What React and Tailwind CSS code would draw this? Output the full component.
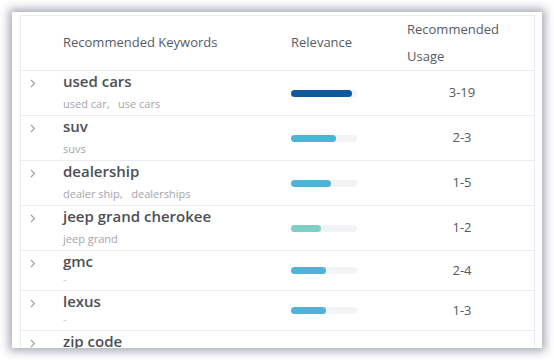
import React from 'react'

const rows = [
  { name: 'used cars', alt: 'used car,\u00a0\u00a0\u00a0use cars', fill: 61, color: 'bg-[#0f5a9e]', usage: '3-19', h: 'h-[45px]' },
  { name: 'suv', alt: 'suvs', fill: 45, color: 'bg-[#4fb3d7]', usage: '2-3', h: 'h-[45px]' },
  { name: 'dealership', alt: 'dealer ship,\u00a0\u00a0\u00a0dealerships', fill: 40, color: 'bg-[#4fb3d7]', usage: '1-5', h: 'h-[45px]' },
  { name: 'jeep grand cherokee', alt: 'jeep grand', fill: 30, color: 'bg-[#7fcfc4]', usage: '1-2', h: 'h-[45px]' },
  { name: 'gmc', alt: '-', fill: 35, color: 'bg-[#4fb3d7]', usage: '2-4', h: 'h-[40px]' },
  { name: 'lexus', alt: '-', fill: 35, color: 'bg-[#4fb3d7]', usage: '1-3', h: 'h-[40px]' },
  { name: 'zip code', alt: '-', fill: 35, color: 'bg-[#4fb3d7]', usage: '1-2', h: 'h-[48px]' },
]

function Chevron() {
  return (
    <svg width="6" height="9" viewBox="0 0 6 9" fill="none">
      <path d="M1 1l3.5 3.5L1 8" stroke="#9a9da6" strokeWidth="1.1" />
    </svg>
  )
}

export default function App() {
  return (
    <div className="w-[554px] h-[360px] bg-white p-3 font-['Open_Sans',sans-serif]">
      <div className="h-full bg-white shadow-[0_0_9px_3px_rgba(90,95,115,0.55)] overflow-hidden px-2 pt-[3px]">
        <div className="border-l border-r border-t border-[#ebebf2] w-[515px]">
          {/* header */}
          <div className="flex h-[55px] items-center border-b border-[#ebebf2] text-[13px] text-[#555b66]">
            <div className="w-[42px]" />
            <div className="w-[228px]">Recommended Keywords</div>
            <div className="w-[116px]">Relevance</div>
            <div className="leading-[27px]">Recommended<br />Usage</div>
          </div>
          {rows.map((r) => (
            <div key={r.name} className={`flex ${r.h} border-b border-[#ebebf2]`}>
              <div className="w-[42px] pl-[9px] pt-[8px]">
                <Chevron />
              </div>
              <div className="w-[228px]">
                <div className="text-[15px] font-semibold leading-[20px] text-[#4d4f55]">{r.name}</div>
                {r.alt === '-' ? (
                  <div className="text-[10px] leading-[17px] text-[#c4c6cc]">-</div>
                ) : (
                  <div className="text-[11px] leading-[25px] text-[#a3a5ab]">{r.alt}</div>
                )}
              </div>
              <div className="w-[116px] flex items-center">
                <div className="w-[66px] h-[7px] rounded-full bg-[#f3f3f5]">
                  <div className={`h-full rounded-full ${r.color}`} style={{ width: r.fill }} />
                </div>
              </div>
              <div className="w-[110px] flex items-center justify-center text-[13px] text-[#55585f]">
                {r.usage}
              </div>
            </div>
          ))}
        </div>
      </div>
    </div>
  )
}
